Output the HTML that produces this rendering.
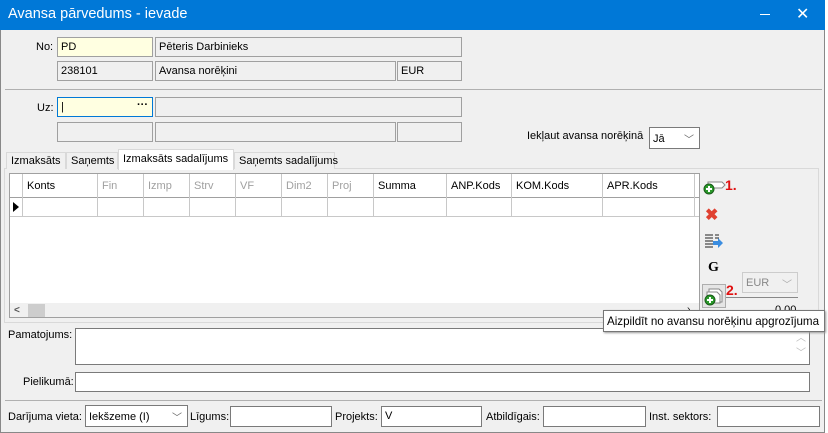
<!DOCTYPE html>
<html><head><meta charset="utf-8"><style>
*{box-sizing:border-box;margin:0;padding:0}
body{width:828px;height:433px;background:#fff;font-family:"Liberation Sans",sans-serif;font-size:11px;color:#000;position:relative;overflow:hidden}
.a{position:absolute}
.win{left:0;top:0;width:825px;height:433px;background:#f0f0f0;border:1px solid #888;border-top:none}
.title{left:0;top:0;width:825px;height:30px;background:#0078d7;color:#fff;font-size:14.5px;padding:6px 0 0 8px}
.f{position:absolute;border:1px solid #a0a0a0;background:#f0f0f0;height:20px;padding:3px 3px;white-space:nowrap;overflow:hidden}
.w{background:#fff;border-color:#7a7a7a}
.y{background:#ffffe1}
.lbl{position:absolute;white-space:nowrap}
.col{position:absolute;top:0;height:24px;border-right:1px solid #c8c8c8;padding:6px 4px;color:#a0a0a0;white-space:nowrap}
.col.b{color:#000}
.vl{position:absolute;top:24px;height:18px;border-right:1px solid #c8c8c8}
.tab{position:absolute;top:152px;height:17px;border:1px solid #d9d9d9;border-bottom:none;background:#f0f0f0;padding:2px 4px;white-space:nowrap}
.chev{position:absolute;right:5px;top:3px;color:#666;font-size:10px}
</style></head><body>
<div class="a win"></div>
<div class="a title">Avansa pārvedums - ievade
<span class="a" style="left:760px;top:14px;width:10px;height:1px;background:#fff"></span>
<span class="a" style="left:796px;top:4px;font-size:16px">✕</span></div>
<div class="a" style="left:825px;top:0;width:3px;height:433px;background:#fff"></div>

<div class="lbl" style="left:36px;top:41px">No:</div>
<div class="f y" style="left:57px;top:37px;width:96px">PD</div>
<div class="f" style="left:155px;top:37px;width:307px">Pēteris Darbinieks</div>
<div class="f" style="left:57px;top:61px;width:96px">238101</div>
<div class="f" style="left:155px;top:61px;width:241px">Avansa norēķini</div>
<div class="f" style="left:397px;top:61px;width:65px">EUR</div>
<div class="a" style="left:5px;top:89px;width:817px;height:1px;background:#b0b0b0"></div>

<div class="lbl" style="left:37px;top:102px">Uz:</div>
<div class="f y" style="left:57px;top:97px;width:96px;border-color:#0078d7">|<span class="a" style="right:4px;top:1px;font-weight:bold">···</span></div>
<div class="f" style="left:155px;top:97px;width:307px"></div>
<div class="f" style="left:57px;top:122px;width:96px"></div>
<div class="f" style="left:155px;top:122px;width:241px"></div>
<div class="f" style="left:397px;top:122px;width:65px"></div>
<div class="lbl" style="left:527px;top:130px">Iekļaut avansa norēķinā</div>
<div class="f w" style="left:649px;top:127px;width:51px;height:22px;padding-top:5px">Jā<span class="chev">﹀</span></div>

<div class="a" style="left:4px;top:168px;width:815px;height:155px;border:1px solid #d9d9d9;background:#f0f0f0"></div>
<div class="tab" style="left:6px;width:60px">Izmaksāts</div>
<div class="tab" style="left:66px;width:52px">Saņemts</div>
<div class="tab" style="left:118px;top:149px;height:21px;width:116px;background:#fff;padding-top:3px">Izmaksāts sadalījums</div>
<div class="tab" style="left:234px;width:101px">Saņemts sadalījums</div>

<div class="a" style="left:9px;top:173px;width:691px;height:145px;background:#fff;border:1px solid #a0a0a0;overflow:hidden">
 <div class="a" style="left:0;top:0;width:700px;height:24px;border-bottom:1px solid #a0a0a0"></div>
 <div class="col" style="left:0;width:13px"></div>
 <div class="col b" style="left:13px;width:75px">Konts</div>
 <div class="col" style="left:88px;width:46px">Fin</div>
 <div class="col" style="left:134px;width:46px">Izmp</div>
 <div class="col" style="left:180px;width:46px">Strv</div>
 <div class="col" style="left:226px;width:46px">VF</div>
 <div class="col" style="left:272px;width:46px">Dim2</div>
 <div class="col" style="left:318px;width:46px">Proj</div>
 <div class="col b" style="left:364px;width:73px">Summa</div>
 <div class="col b" style="left:437px;width:65px">ANP.Kods</div>
 <div class="col b" style="left:502px;width:91px">KOM.Kods</div>
 <div class="col b" style="left:593px;width:92px">APR.Kods</div>
 <div class="a" style="left:0;top:42px;width:690px;height:1px;background:#c8c8c8"></div>
 <div class="vl" style="left:0;width:13px"></div><div class="vl" style="left:13px;width:75px"></div><div class="vl" style="left:88px;width:46px"></div><div class="vl" style="left:134px;width:46px"></div><div class="vl" style="left:180px;width:46px"></div><div class="vl" style="left:226px;width:46px"></div><div class="vl" style="left:272px;width:46px"></div><div class="vl" style="left:318px;width:46px"></div><div class="vl" style="left:364px;width:73px"></div><div class="vl" style="left:437px;width:65px"></div><div class="vl" style="left:502px;width:91px"></div><div class="vl" style="left:593px;width:92px"></div>
 <div class="a" style="left:3px;top:28px;width:0;height:0;border-left:6px solid #000;border-top:5px solid transparent;border-bottom:5px solid transparent"></div>
 <div class="a" style="left:0;top:129px;width:690px;height:16px;background:#f0f0f0"></div>
 <div class="a" style="left:4px;top:131px;font-size:10px;font-weight:bold;color:#555">&lt;</div>
 <div class="a" style="left:18px;top:130px;width:17px;height:14px;background:#cdcdcd"></div>
</div>

<svg class="a" style="left:702px;top:176px" width="24" height="20"><path d="M6 6h14l3 3-3 3H6z" fill="#fff" stroke="#888"/><circle cx="7" cy="13" r="5" fill="#2a9a2a" stroke="#1a5a1a"/><path d="M4 13h6M7 10v6" stroke="#fff" stroke-width="2"/></svg>
<div class="a" style="left:725px;top:177px;color:#e01010;font-weight:bold;font-size:14px">1.</div>
<div class="a" style="left:705px;top:205px;color:#e04030;font-size:16px;font-weight:bold">✖</div>
<svg class="a" style="left:704px;top:233px" width="20" height="16"><path d="M1 2h8M1 5h8M1 8h8M1 11h8M1 14h8M11 2h4M11 5h4" stroke="#222"/><path d="M9 8h5V5l5 5-5 5v-3H9z" fill="#3b8de0"/></svg>
<div class="a" style="left:708px;top:260px;font-weight:bold;font-family:'Liberation Serif',serif;font-size:14px">G</div>
<div class="a" style="left:702px;top:284px;width:24px;height:24px;border:1px solid #adadad;background:#e5e5e5"></div>
<svg class="a" style="left:703px;top:285px" width="22" height="22"><path d="M6 4h10l3 3v10H6z" fill="#fff" stroke="#888"/><path d="M4 7h10l3 3v8H4z" fill="#fff" stroke="#888"/><circle cx="7" cy="15" r="5" fill="#2a9a2a" stroke="#1a5a1a"/><path d="M4 15h6M7 12v6" stroke="#fff" stroke-width="2"/></svg>
<div class="a" style="left:726px;top:282px;color:#e01010;font-weight:bold;font-size:14px">2.</div>
<div class="f" style="left:742px;top:272px;width:56px;height:21px;border-color:#ccc;color:#888;padding-top:4px">EUR<span class="chev" style="color:#aaa">﹀</span></div>
<div class="a" style="left:726px;top:297px;width:72px;height:1px;background:#888"></div>
<div class="a" style="left:775px;top:304px">0.00</div>
<div class="a" style="left:687px;top:304px;font-size:10px">›</div>

<div class="lbl" style="left:8px;top:329px">Pamatojums:</div>
<div class="f w" style="left:75px;top:328px;width:735px;height:37px"><span class="a" style="right:3px;top:2px;color:#bbb;font-size:10px;line-height:15px">︿<br>﹀</span></div>
<div class="lbl" style="left:23px;top:376px">Pielikumā:</div>
<div class="f w" style="left:75px;top:372px;width:735px;height:20px"></div>
<div class="a" style="left:5px;top:400px;width:817px;height:1px;background:#b0b0b0"></div>

<div class="lbl" style="left:8px;top:411px">Darījuma vieta:</div>
<div class="f w" style="left:85px;top:405px;width:103px;height:22px;padding-top:5px">Iekšzeme (I)<span class="chev">﹀</span></div>
<div class="lbl" style="left:190px;top:411px">Līgums:</div>
<div class="f w" style="left:230px;top:406px;width:102px;height:21px"></div>
<div class="lbl" style="left:335px;top:411px">Projekts:</div>
<div class="f w" style="left:381px;top:406px;width:101px;height:21px">V</div>
<div class="lbl" style="left:486px;top:411px">Atbildīgais:</div>
<div class="f w" style="left:543px;top:406px;width:103px;height:21px"></div>
<div class="lbl" style="left:649px;top:411px">Inst. sektors:</div>
<div class="f w" style="left:717px;top:406px;width:103px;height:21px"></div>

<div class="a" style="left:603px;top:310px;width:222px;height:22px;background:#fff;border:1px solid #767676;padding:4px 3px;font-size:11.6px;white-space:nowrap;box-shadow:1px 1px 2px #999">Aizpildīt no avansu norēķinu apgrozījuma</div>
</body></html>
